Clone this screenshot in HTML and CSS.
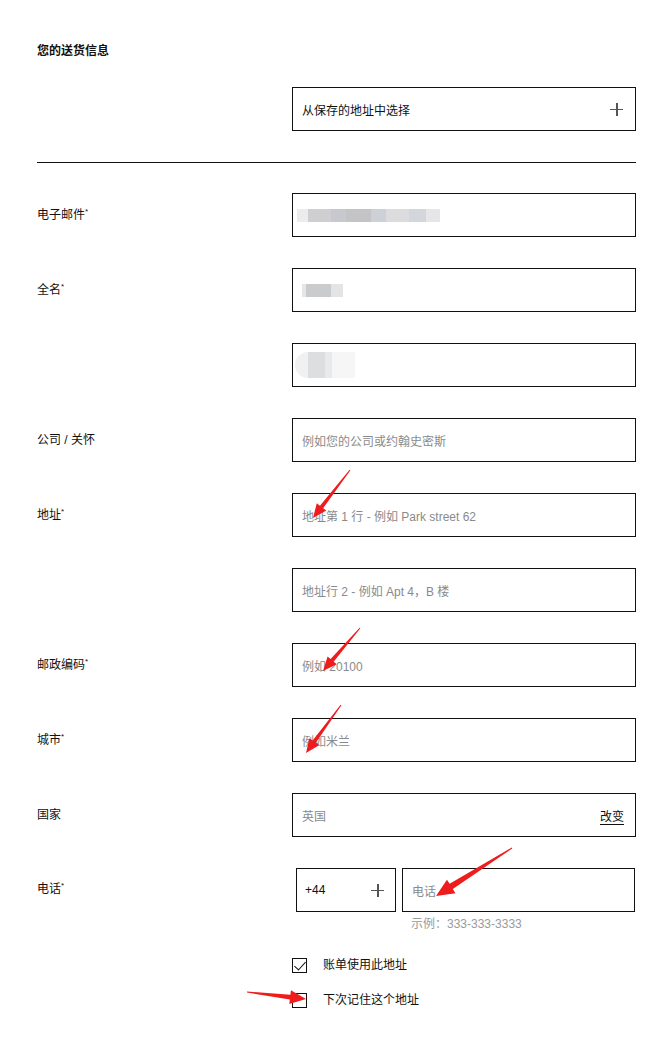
FILE: index.html
```html
<!DOCTYPE html>
<html lang="zh-CN">
<head>
  <meta charset="UTF-8" />
  <meta name="viewport" content="width=device-width, initial-scale=1.0" />
  <title>您的送货信息</title>
  <link rel="stylesheet" href="styles.css">
</head>
<body>
  <div class="container">
    <h2 class="title">您的送货信息</h2>

    <div class="row saved-row">
      <div></div>
      <div class="box select">
        <span>从保存的地址中选择</span>
        <span class="plus"></span>
      </div>
    </div>

    <hr class="divider">

    <div class="fields">
      <div class="row">
        <label>电子邮件<sup>*</sup></label>
        <div class="box">
          <span class="blur blur-email"></span>
        </div>
      </div>
      <div class="row">
        <label>全名<sup>*</sup></label>
        <div class="box">
          <span class="blur blur-name"></span>
        </div>
      </div>
      <div class="row">
        <label></label>
        <div class="box">
          <span class="blur blur-last"></span>
        </div>
      </div>
      <div class="row">
        <label>公司 / 关怀</label>
        <div class="box"><span class="placeholder">例如您的公司或约翰史密斯</span></div>
      </div>
      <div class="row">
        <label>地址<sup>*</sup></label>
        <div class="box"><span class="placeholder">地址第 1 行 - 例如 Park street 62</span></div>
      </div>
      <div class="row">
        <label></label>
        <div class="box"><span class="placeholder">地址行 2 - 例如 Apt 4，B 楼</span></div>
      </div>
      <div class="row">
        <label>邮政编码<sup>*</sup></label>
        <div class="box"><span class="placeholder">例如 20100</span></div>
      </div>
      <div class="row">
        <label>城市<sup>*</sup></label>
        <div class="box"><span class="placeholder">例如米兰</span></div>
      </div>
      <div class="row">
        <label>国家</label>
        <div class="box select">
          <span class="placeholder">英国</span>
          <a class="change">改变</a>
        </div>
      </div>
      <div class="row phone-row">
        <label>电话<sup>*</sup></label>
        <div class="phone">
          <div class="phone-inputs">
            <div class="box code">
              <span>+44</span>
              <span class="plus"></span>
            </div>
            <div class="box number"><span class="placeholder">电话</span></div>
          </div>
          <div class="hint">示例：333-333-3333</div>
        </div>
      </div>
    </div>

    <div class="checks">
      <div class="check">
        <span class="checkbox checked"></span>
        <span>账单使用此地址</span>
      </div>
      <div class="check">
        <span class="checkbox"></span>
        <span>下次记住这个地址</span>
      </div>
    </div>
  </div>

  <svg class="annotations" width="655" height="1037" viewBox="0 0 655 1037">
    <g fill="#ee1c1c">
      <polygon points="349.6,469.7 319.97,505.69 316.8,503.24 313,518 326.3,510.58 323.13,508.13 350.4,470.3"/>
      <polygon points="359.62,627.67 330.61,659.09 327.58,656.48 323,671 336.68,664.3 333.65,661.69 360.38,628.33"/>
      <polygon points="340.6,704.71 312.63,740.51 309.4,738.16 306,753 319.1,745.22 315.87,742.87 341.4,705.29"/>
      <polygon points="511.73,847.58 449.61,883.86 446.94,879.63 436,896 455.48,893.15 452.81,888.93 512.27,848.42"/>
      <polygon points="246.94,992.5 289.82,999.59 289.28,1004.06 306,999 290.94,990.16 290.41,994.63 247.06,991.5"/>
    </g>
  </svg>
</body>
</html>
```

FILE: styles.css
```css
body {
  margin: 0;
  background: #fff;
  color: #111;
  font-family: "Liberation Sans", "Noto Sans CJK SC", sans-serif;
  font-size: 12px;
  position: relative;
}
.container {
  width: 599px;
  padding: 43px 0 0 37px;
}
.title {
  margin: 0;
  font-size: 12px;
  line-height: 16px;
  font-weight: bold;
}
.row {
  display: grid;
  grid-template-columns: 255px 344px;
  align-items: center;
}
.saved-row {
  margin-top: 28px;
}
.divider {
  margin: 31px 0 0;
  border: none;
  border-top: 1px solid #111;
}
.fields {
  margin-top: 30px;
  display: flex;
  flex-direction: column;
  gap: 31px;
}
label {
  line-height: 16px;
}
sup {
  font-size: 8px;
  vertical-align: 5px;
  line-height: 0;
}
.box {
  box-sizing: border-box;
  height: 44px;
  border: 1px solid #111;
  display: flex;
  align-items: center;
  padding: 0 11px 0 9px;
  background: #fff;
}
.select {
  justify-content: space-between;
}
.placeholder {
  color: #8a8a8a;
}
.plus {
  width: 13px;
  height: 13px;
  position: relative;
  margin-right: 1px;
}
.plus::before,
.plus::after {
  content: "";
  position: absolute;
  background: #555;
}
.plus::before {
  left: 6px;
  top: 0;
  width: 1.5px;
  height: 13px;
}
.plus::after {
  top: 6px;
  left: 0;
  height: 1.5px;
  width: 13px;
}
.change {
  color: #111;
  text-decoration: underline;
  text-underline-offset: 3px;
}
.phone-row {
  align-items: start;
}
.phone-row label {
  padding-top: 13px;
}
.phone-inputs {
  display: flex;
  gap: 6px;
  padding-left: 4px;
}
.code {
  width: 100px;
  justify-content: space-between;
  padding: 0 10px 0 8px;
}
.number {
  width: 233px;
}
.hint {
  color: #9a9a9a;
  padding-left: 119px;
  margin-top: 4px;
  line-height: 16px;
}
.blur {
  display: block;
  height: 13px;
}
.blur-email {
  width: 143px;
  margin-left: -5px;
  background: linear-gradient(90deg, #ececec 0 8%, #cfcfd2 8% 24%, #c7c9cf 24% 34%, #c4c4c7 34% 52%, #cdd0d6 52% 62%, #dcdcdf 62% 78%, #d3d6db 78% 90%, #e6e6e8 90%);
}
.blur-name {
  width: 41px;
  background: linear-gradient(90deg, #e6e6e6 0 10%, #cacbcd 10% 70%, #e3e4e6 70%);
}
.blur-last {
  width: 60px;
  height: 26px;
  margin-left: -7px;
  border-radius: 13px 0 0 13px;
  background: linear-gradient(90deg, #f1f1f1 0 22%, #dcdedf 22% 50%, #e8eaeb 50% 62%, #f6f6f6 62% 100%);
}
.checks {
  margin: 25px 0 0 255px;
  display: flex;
  flex-direction: column;
  gap: 19px;
}
.check {
  display: flex;
  align-items: center;
  gap: 16px;
  line-height: 16px;
}
.checkbox {
  box-sizing: border-box;
  width: 15px;
  height: 15px;
  border: 1px solid #111;
  position: relative;
}
.checkbox.checked::after {
  content: "";
  position: absolute;
  left: 4px;
  top: 0;
  width: 5px;
  height: 10px;
  border-right: 1.5px solid #111;
  border-bottom: 1.5px solid #111;
  transform: rotate(42deg);
}
.annotations {
  position: absolute;
  left: 0;
  top: 0;
  pointer-events: none;
}
```
